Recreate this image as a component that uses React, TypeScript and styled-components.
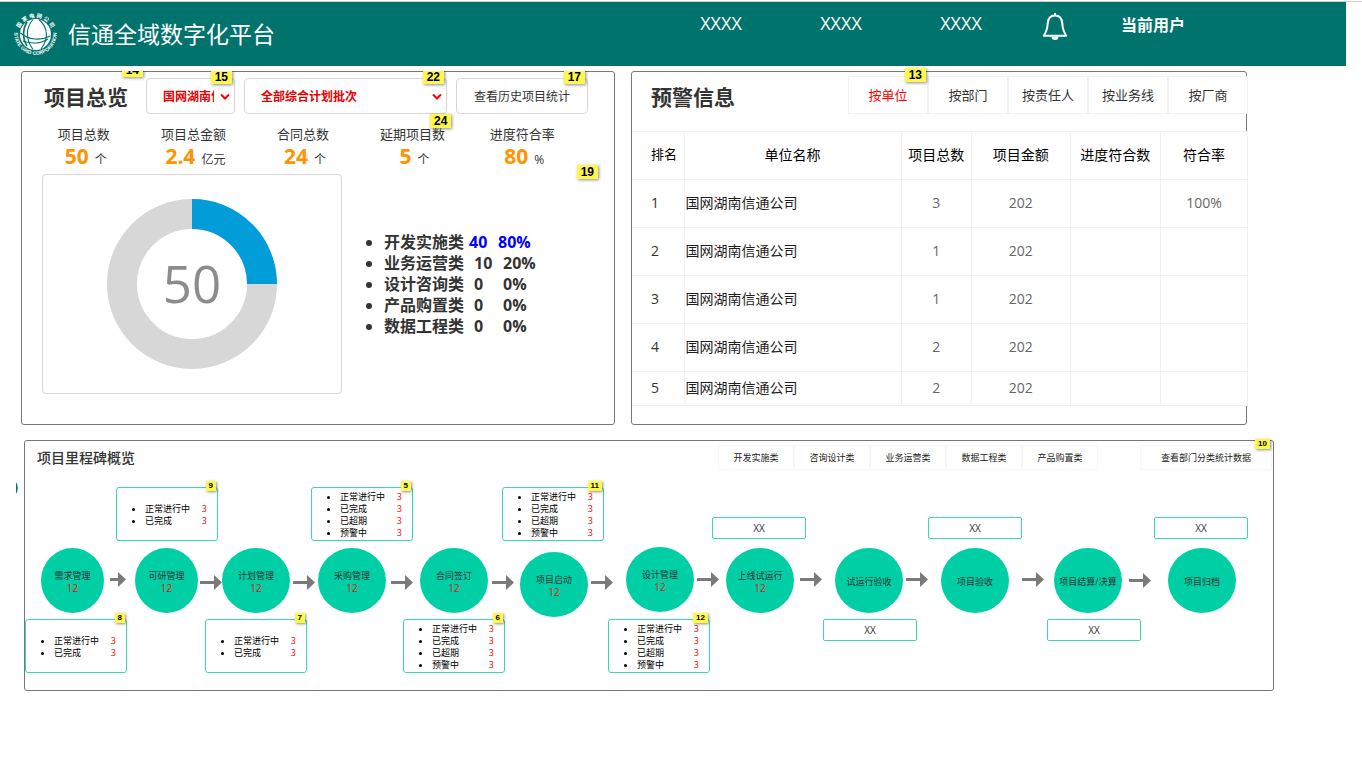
import React from "react";
import styled, { createGlobalStyle } from "styled-components";

const TEAL = "#00736c";
const GREEN = "#00cfa5";

const GlobalStyle = createGlobalStyle`
  *, *::before, *::after { box-sizing: border-box; }
  body {
    margin: 0;
    background: #fff;
    color: #333;
    font-family: "Open Sans", "Noto Sans CJK SC", sans-serif;
    font-size: 13px;
  }
  button, select { font-family: inherit; margin: 0; }
  h1, h2, ul, dl, dd { margin: 0; padding: 0; }
`;

/* ---------- header ---------- */

const TopStrip = styled.div`
  height: 2px;
  border-bottom: 1px solid #cfcfcf;
`;

const Header = styled.header`
  display: flex;
  justify-content: space-between;
  height: 64px;
  margin-right: 16px;
  padding: 0 161px 0 14px;
  background: ${TEAL};
  color: #fff;
`;

const Brand = styled.div`
  display: flex;
  align-items: center;
  gap: 11px;
`;

const BrandName = styled.h1`
  font-size: 23px;
  font-weight: 400;
  line-height: 32px;
  white-space: nowrap;
`;

const Nav = styled.nav`
  display: flex;
  align-items: flex-start;
  padding-top: 10px;
`;

const NavLink = styled.a`
  width: 120px;
  color: #fff;
  font-size: 18px;
  line-height: 22px;
  text-align: center;
  text-decoration: none;
`;

const BellButton = styled.button`
  display: flex;
  justify-content: center;
  width: 68px;
  height: 32px;
  padding: 0;
  border: 0;
  background: none;
  color: #fff;
`;

const UserName = styled.span`
  margin-left: 32px;
  font-size: 16px;
  font-weight: 700;
  line-height: 26px;
  white-space: nowrap;
`;

/* ---------- shared parts ---------- */

const Panel = styled.section`
  min-width: 0;
  border: 1px solid #777;
  border-radius: 3px;
  background: #fff;
`;

const PanelTitle = styled.h2`
  position: relative;
  color: #333;
  font-size: 21px;
  font-weight: 700;
  line-height: 38px;
  white-space: nowrap;
`;

const Note = styled.span<{ $small?: boolean; $top: number; $right: number }>`
  position: absolute;
  z-index: 1;
  top: ${(p) => p.$top}px;
  right: ${(p) => p.$right}px;
  padding: ${(p) => (p.$small ? "0 3px" : "0 4px")};
  background: #fff84a;
  box-shadow: 1px 1px 3px rgba(0, 0, 0, 0.45);
  color: #000;
  font-family: "Liberation Sans", sans-serif;
  font-size: ${(p) => (p.$small ? 8 : 12)}px;
  font-weight: 700;
  line-height: ${(p) => (p.$small ? 10 : 14)}px;
`;

/* ---------- overview ---------- */

const TopRow = styled.main`
  display: grid;
  grid-template-columns: minmax(0, 594fr) minmax(0, 616fr);
  gap: 16px;
  margin: 5px 115px 15px 21px;
`;

const OverviewPanel = styled(Panel)`
  padding-bottom: 30px;
  clip-path: inset(0);
`;

const OverviewHead = styled.div`
  display: flex;
  gap: 9px;
  height: 42px;
  padding: 6px 20px 0 22px;
  & > h2 { margin-right: 9px; }
`;

const Field = styled.div<{ $width: number }>`
  position: relative;
  flex: 0 1 ${(p) => p.$width}px;
  min-width: 0;
  color: #f00;
  svg {
    position: absolute;
    top: 15px;
    right: 4px;
    pointer-events: none;
  }
`;

const Select = styled.select`
  appearance: none;
  width: 100%;
  height: 36px;
  padding: 0 20px 0 16px;
  border: 1px solid #d7d7d7;
  border-radius: 4px;
  background: #fff;
  color: #e60000;
  font-size: 12px;
  font-weight: 700;
`;

const HistoryButton = styled.button`
  width: 100%;
  height: 36px;
  padding: 0;
  border: 1px solid #d7d7d7;
  border-radius: 4px;
  background: #fff;
  color: #333;
  font-size: 12px;
`;

const Metrics = styled.dl`
  display: grid;
  grid-template-columns: repeat(5, 1fr);
  padding: 10px 37px 6px 7px;
`;

const Metric = styled.div`
  position: relative;
  text-align: center;
  white-space: nowrap;
  dt { line-height: 20px; }
  dd {
    display: flex;
    align-items: baseline;
    justify-content: center;
    gap: 6px;
    height: 24px;
    padding-left: 4px;
    font-size: 12px;
    line-height: 24px;
  }
  strong { color: #ff9300; font-size: 21px; }
`;

const OverviewBody = styled.div`
  position: relative;
  display: flex;
  align-items: center;
  padding-left: 20px;
`;

const DonutBox = styled.div`
  display: grid;
  place-items: center;
  flex: 0 1 300px;
  height: 220px;
  border: 1px solid #d7d7d7;
  border-radius: 4px;
`;

const CategoryList = styled.ul`
  margin-left: 42px;
  font-size: 16px;
  font-weight: 700;
  line-height: 21px;
`;

const CategoryRow = styled.li`
  white-space: nowrap;
  a { color: #00f; text-decoration: none; }
`;

const Count = styled.span<{ $linked?: boolean }>`
  display: inline-block;
  width: 29px;
  margin-left: ${(p) => (p.$linked ? 5 : 10)}px;
`;

/* ---------- alerts ---------- */

const AlertHead = styled.div`
  display: flex;
  justify-content: space-between;
  height: 59px;
  margin-right: -2px;
  padding: 4px 0 0 19px;
  h2 { line-height: 42px; }
`;

const TabGroup = styled.div<{ $tab: number }>`
  display: grid;
  grid-template-columns: repeat(5, ${(p) => p.$tab}px);
`;

const Tab = styled.button<{ $active?: boolean }>`
  position: relative;
  height: 38px;
  padding: 0 0 2px;
  border: 1px solid #f2f2f2;
  background: #fff;
  color: ${(p) => (p.$active ? "#f00" : "#333")};
  font-size: 13px;
`;

const Table = styled.table`
  width: calc(100% + 2px);
  margin-bottom: 18px;
  border-collapse: collapse;
  table-layout: fixed;
  color: #333;
  font-size: 14px;
  th, td {
    height: 48px;
    padding: 0 0 2px;
    border: 1px solid #f0f0f0;
    background: #fff;
    font-weight: 400;
    text-align: center;
    white-space: nowrap;
  }
  th { padding-bottom: 4px; color: #000; }
  td { color: #666; }
  th:first-child, td:first-child {
    padding-left: 19px;
    border-left: 0;
    text-align: left;
  }
  th:first-child { font-size: 13px; }
  td:first-child { color: #333; }
  td:nth-child(2) { padding: 0 0 4px 1px; color: #1e1e1e; text-align: left; }
  tr:last-child td { height: 34px; }
`;

/* ---------- milestones ---------- */

const MilestonePanel = styled(Panel)`
  position: relative;
  margin: 0 88px 0 24px;
`;

const SideHandle = styled.svg`
  position: absolute;
  top: 41px;
  left: -9px;
`;

const MilestoneHead = styled.div`
  position: relative;
  display: flex;
  height: 29px;
  padding: 4px 1px 0 12px;
`;

const MilestoneTitle = styled.h2`
  margin-right: auto;
  font-size: 14px;
  font-weight: 500;
  line-height: 26px;
`;

const SmallTab = styled.button`
  height: 25px;
  padding: 0;
  border: 1px solid #f7f7f7;
  background: #fff;
  color: #222;
  font-size: 9px;
`;

const DeptButton = styled(SmallTab)`
  width: 132px;
  margin-left: 42px;
`;

const Canvas = styled.div`
  position: relative;
  height: 220px;
  color: #333;
  font-size: 9px;
  line-height: 12px;
`;

const Placed = styled.div<{ $x: number; $y: number }>`
  position: absolute;
  left: ${(p) => p.$x}px;
  top: ${(p) => p.$y}px;
`;

const Stage = styled(Placed)<{ $narrow?: boolean }>`
  display: flex;
  flex-direction: column;
  align-items: center;
  justify-content: center;
  width: ${(p) => (p.$narrow ? 63 : 68)}px;
  height: 65px;
  padding-top: 2px;
  border-radius: 50%;
  background: ${GREEN};
  white-space: nowrap;
  span { color: #e8100a; font-size: 10px; }
`;

const Callout = styled(Placed)`
  display: flex;
  flex-direction: column;
  justify-content: center;
  width: 102px;
  height: 54px;
  padding-top: 1px;
  border: 1px solid #38d8b4;
  border-radius: 3px;
  background: #fff;
  color: #000;
`;

const StatusList = styled.ul`
  padding: 0 10px 0 28px;
`;

const StatusItem = styled.li`
  b { float: right; color: #f00; font-weight: 400; }
`;

const ValueBox = styled(Placed)`
  width: 94px;
  height: 22px;
  border: 1px solid #38d8b4;
  border-radius: 2px;
  background: #fff;
  font-size: 10px;
  line-height: 20px;
  text-align: center;
`;

const ArrowSpot = styled(Placed)`
  display: flex;
  color: #7a7a7a;
`;

/* ---------- drawings ---------- */

const Logo = () => (
  <svg width="43" height="43" viewBox="0 0 43 43" fill="none" aria-hidden="true">
    <defs>
      <path id="ringTop" d="M4.600 21.500a16.900 16.900 0 0 1 33.800 0" />
      <path id="ringBottom" d="M1.200 14.500a21.200 21.200 0 1 0 40.600 0" />
    </defs>
    <circle cx="21.500" cy="21.500" r="15.500" fill="#fff" />
    <g stroke={TEAL} strokeWidth="1.1">
      <path d="M19 6.500c-7 8-8 19 0 30" />
      <path d="M25 6.500c9 8 10 19 2 29.500" />
      <path d="M6.500 20c8 7 20 8 30 3" />
      <path d="M9 28c8 3 18 3 25-2" />
      <path d="M13 9c-4 6-5 16 0 24" strokeWidth="1.600" />
    </g>
    <text fill="#fff" fontSize="5.500" fontWeight="700">
      <textPath href="#ringTop" startOffset="50%" textAnchor="middle">国 家 电 网 公 司</textPath>
    </text>
    <text fill="#fff" fontSize="5" fontWeight="700" fontFamily="Liberation Sans">
      <textPath href="#ringBottom" startOffset="50%" textAnchor="middle">STATE GRID CORPORATION</textPath>
    </text>
  </svg>
);

const Bell = () => (
  <svg width="26" height="30" viewBox="0 0 26 30" fill="none" stroke="currentColor" strokeWidth="2" aria-hidden="true">
    <path d="M13 3.500c-4.800 0-7 3.500-7.300 8-.3 6-1.400 8.500-4 12.200h22.600c-2.600-3.700-3.700-6.200-4-12.200-.3-4.500-2.500-8-7.300-8z" strokeLinejoin="round" />
    <path d="M13 1v3" />
    <path d="M9.500 24.500a3.500 3.500 0 0 0 7 0z" fill="currentColor" stroke="none" />
  </svg>
);

const Chevron = () => (
  <svg width="12" height="8" viewBox="0 0 12 8" fill="none" stroke="currentColor" strokeWidth="2" aria-hidden="true">
    <path d="M2 1.500 6 5.500 10 1.500" />
  </svg>
);

const Donut = () => (
  <svg width="170" height="170" viewBox="0 0 170 170">
    <circle cx="85" cy="85" r="70" fill="none" stroke="#d7d7d7" strokeWidth="30" />
    <path d="M85 15a70 70 0 0 1 70 70" fill="none" stroke="#009dd9" strokeWidth="30" />
    <text x="85" y="104" textAnchor="middle" fontSize="51" fill="#8c8c8c">50</text>
  </svg>
);

const Arrow = ({ short }: { short?: boolean }) => {
  const w = short ? 16 : 22;
  return (
    <svg width={w} height="15" viewBox={`0 0 ${w} 15`} aria-hidden="true">
      <path d={`M0 6H${w - 8}V0L${w} 7.500 ${w - 8} 15V9H0z`} fill="currentColor" />
    </svg>
  );
};

/* ---------- data ---------- */

const metrics = [
  { label: "项目总数", value: "50", unit: "个" },
  { label: "项目总金额", value: "2.4", unit: "亿元" },
  { label: "合同总数", value: "24", unit: "个" },
  { label: "延期项目数", value: "5", unit: "个", note: "24" },
  { label: "进度符合率", value: "80", unit: "%" },
];

const categories = [
  { name: "开发实施类", count: 40, share: "80%", linked: true },
  { name: "业务运营类", count: 10, share: "20%" },
  { name: "设计咨询类", count: 0, share: "0%" },
  { name: "产品购置类", count: 0, share: "0%" },
  { name: "数据工程类", count: 0, share: "0%" },
];

const alertTabs = ["按单位", "按部门", "按责任人", "按业务线", "按厂商"];
const columns = [
  { name: "排名", width: 52 },
  { name: "单位名称", width: 217 },
  { name: "项目总数", width: 70 },
  { name: "项目金额", width: 99 },
  { name: "进度符合数", width: 90 },
  { name: "符合率", width: 87 },
];
const alertRows = [
  ["1", "国网湖南信通公司", "3", "202", "", "100%"],
  ["2", "国网湖南信通公司", "1", "202", "", ""],
  ["3", "国网湖南信通公司", "1", "202", "", ""],
  ["4", "国网湖南信通公司", "2", "202", "", ""],
  ["5", "国网湖南信通公司", "2", "202", "", ""],
];

const stageTabs = ["开发实施类", "咨询设计类", "业务运营类", "数据工程类", "产品购置类"];

const stages = [
  { name: "需求管理", x: 16, y: 78, total: 12, narrow: true },
  { name: "可研管理", x: 110, y: 78, total: 12, narrow: true },
  { name: "计划管理", x: 197, y: 78, total: 12 },
  { name: "采购管理", x: 293, y: 78, total: 12 },
  { name: "合同签订", x: 395, y: 78, total: 12 },
  { name: "项目启动", x: 495, y: 82, total: 12 },
  { name: "设计管理", x: 601, y: 77, total: 12 },
  { name: "上线试运行", x: 701, y: 78, total: 12 },
  { name: "试运行验收", x: 810, y: 78 },
  { name: "项目验收", x: 916, y: 78 },
  { name: "项目结算/决算", x: 1029, y: 78 },
  { name: "项目归档", x: 1143, y: 78 },
];

const arrows = [
  { x: 85, y: 102, short: true },
  { x: 175, y: 105 },
  { x: 268, y: 105 },
  { x: 366, y: 105 },
  { x: 467, y: 105 },
  { x: 566, y: 105 },
  { x: 672, y: 102 },
  { x: 775, y: 102 },
  { x: 881, y: 102 },
  { x: 997, y: 102 },
  { x: 1104, y: 103 },
];

const twoStates = ["正常进行中", "已完成"];
const fourStates = ["正常进行中", "已完成", "已超期", "预警中"];
const callouts = [
  { note: "8", x: 0, y: 149, states: twoStates },
  { note: "9", x: 91, y: 17, states: twoStates },
  { note: "7", x: 180, y: 149, states: twoStates },
  { note: "5", x: 286, y: 17, states: fourStates },
  { note: "6", x: 378, y: 149, states: fourStates },
  { note: "11", x: 477, y: 17, states: fourStates },
  { note: "12", x: 583, y: 149, states: fourStates },
];

const valueBoxes = [
  { x: 687, y: 47 },
  { x: 798, y: 149 },
  { x: 903, y: 47 },
  { x: 1022, y: 149 },
  { x: 1129, y: 47 },
];

/* ---------- page ---------- */

export default function App() {
  return (
    <>
      <GlobalStyle />
      <TopStrip />
      <Header>
        <Brand>
          <Logo />
          <BrandName>信通全域数字化平台</BrandName>
        </Brand>
        <Nav>
          <NavLink href="#a">XXXX</NavLink>
          <NavLink href="#b">XXXX</NavLink>
          <NavLink href="#c">XXXX</NavLink>
          <BellButton aria-label="通知"><Bell /></BellButton>
          <UserName>当前用户</UserName>
        </Nav>
      </Header>

      <TopRow>
        <OverviewPanel>
          <OverviewHead>
            <PanelTitle>
              项目总览
              <Note $top={-15} $right={-15}>14</Note>
            </PanelTitle>
            <Field $width={89}>
              <Select aria-label="单位" defaultValue="a">
                <option value="a">国网湖南信通公司</option>
              </Select>
              <Chevron />
              <Note $top={-8} $right={3}>15</Note>
            </Field>
            <Field $width={203}>
              <Select aria-label="计划批次" defaultValue="a">
                <option value="a">全部综合计划批次</option>
              </Select>
              <Chevron />
              <Note $top={-8} $right={3}>22</Note>
            </Field>
            <Field $width={132}>
              <HistoryButton>查看历史项目统计</HistoryButton>
              <Note $top={-8} $right={3}>17</Note>
            </Field>
          </OverviewHead>
          <Metrics>
            {metrics.map((m) => (
              <Metric key={m.label}>
                <dt>{m.label}</dt>
                <dd><strong>{m.value}</strong>{m.unit}</dd>
                {m.note && <Note $top={-10} $right={16}>{m.note}</Note>}
              </Metric>
            ))}
          </Metrics>
          <OverviewBody>
            <DonutBox><Donut /></DonutBox>
            <CategoryList>
              {categories.map((c) => {
                const figures = (
                  <>
                    <Count $linked={c.linked}>{c.count}</Count>
                    {c.share}
                  </>
                );
                return (
                  <CategoryRow key={c.name}>
                    {c.name}
                    {c.linked ? <a href="#detail">{figures}</a> : figures}
                  </CategoryRow>
                );
              })}
            </CategoryList>
            <Note $top={-9} $right={16}>19</Note>
          </OverviewBody>
        </OverviewPanel>

        <Panel>
          <AlertHead>
            <PanelTitle>预警信息</PanelTitle>
            <TabGroup $tab={80}>
              {alertTabs.map((t, i) => (
                <Tab key={t} $active={i === 0}>
                  {t}
                  {i === 0 && <Note $top={-9} $right={1}>13</Note>}
                </Tab>
              ))}
            </TabGroup>
          </AlertHead>
          <Table>
            <colgroup>
              {columns.map((c) => <col key={c.name} width={c.width} />)}
            </colgroup>
            <thead>
              <tr>{columns.map((c) => <th key={c.name} scope="col">{c.name}</th>)}</tr>
            </thead>
            <tbody>
              {alertRows.map((row) => (
                <tr key={row[0]}>{row.map((cell, i) => <td key={i}>{cell}</td>)}</tr>
              ))}
            </tbody>
          </Table>
        </Panel>
      </TopRow>

      <MilestonePanel>
        <SideHandle width="2" height="12" viewBox="0 0 2 12" aria-hidden="true">
          <path d="M0 0Q3.500 6 0 12z" fill={TEAL} />
        </SideHandle>
        <MilestoneHead>
          <MilestoneTitle>项目里程碑概览</MilestoneTitle>
          <TabGroup $tab={76}>
            {stageTabs.map((t) => <SmallTab key={t}>{t}</SmallTab>)}
          </TabGroup>
          <DeptButton>查看部门分类统计数据</DeptButton>
          <Note $small $top={-2} $right={3}>10</Note>
        </MilestoneHead>
        <Canvas>
          {arrows.map((a) => (
            <ArrowSpot key={a.x} $x={a.x} $y={a.y}><Arrow short={a.short} /></ArrowSpot>
          ))}
          {stages.map((s) => (
            <Stage key={s.name} $x={s.x} $y={s.y} $narrow={s.narrow}>
              {s.name}
              {s.total && <span>{s.total}</span>}
            </Stage>
          ))}
          {callouts.map((c) => (
            <Callout key={c.note} $x={c.x} $y={c.y}>
              <StatusList>
                {c.states.map((s) => <StatusItem key={s}>{s}<b>3</b></StatusItem>)}
              </StatusList>
              <Note $small $top={-7} $right={1}>{c.note}</Note>
            </Callout>
          ))}
          {valueBoxes.map((v) => (
            <ValueBox key={v.x} $x={v.x} $y={v.y}>XX</ValueBox>
          ))}
        </Canvas>
      </MilestonePanel>
    </>
  );
}
